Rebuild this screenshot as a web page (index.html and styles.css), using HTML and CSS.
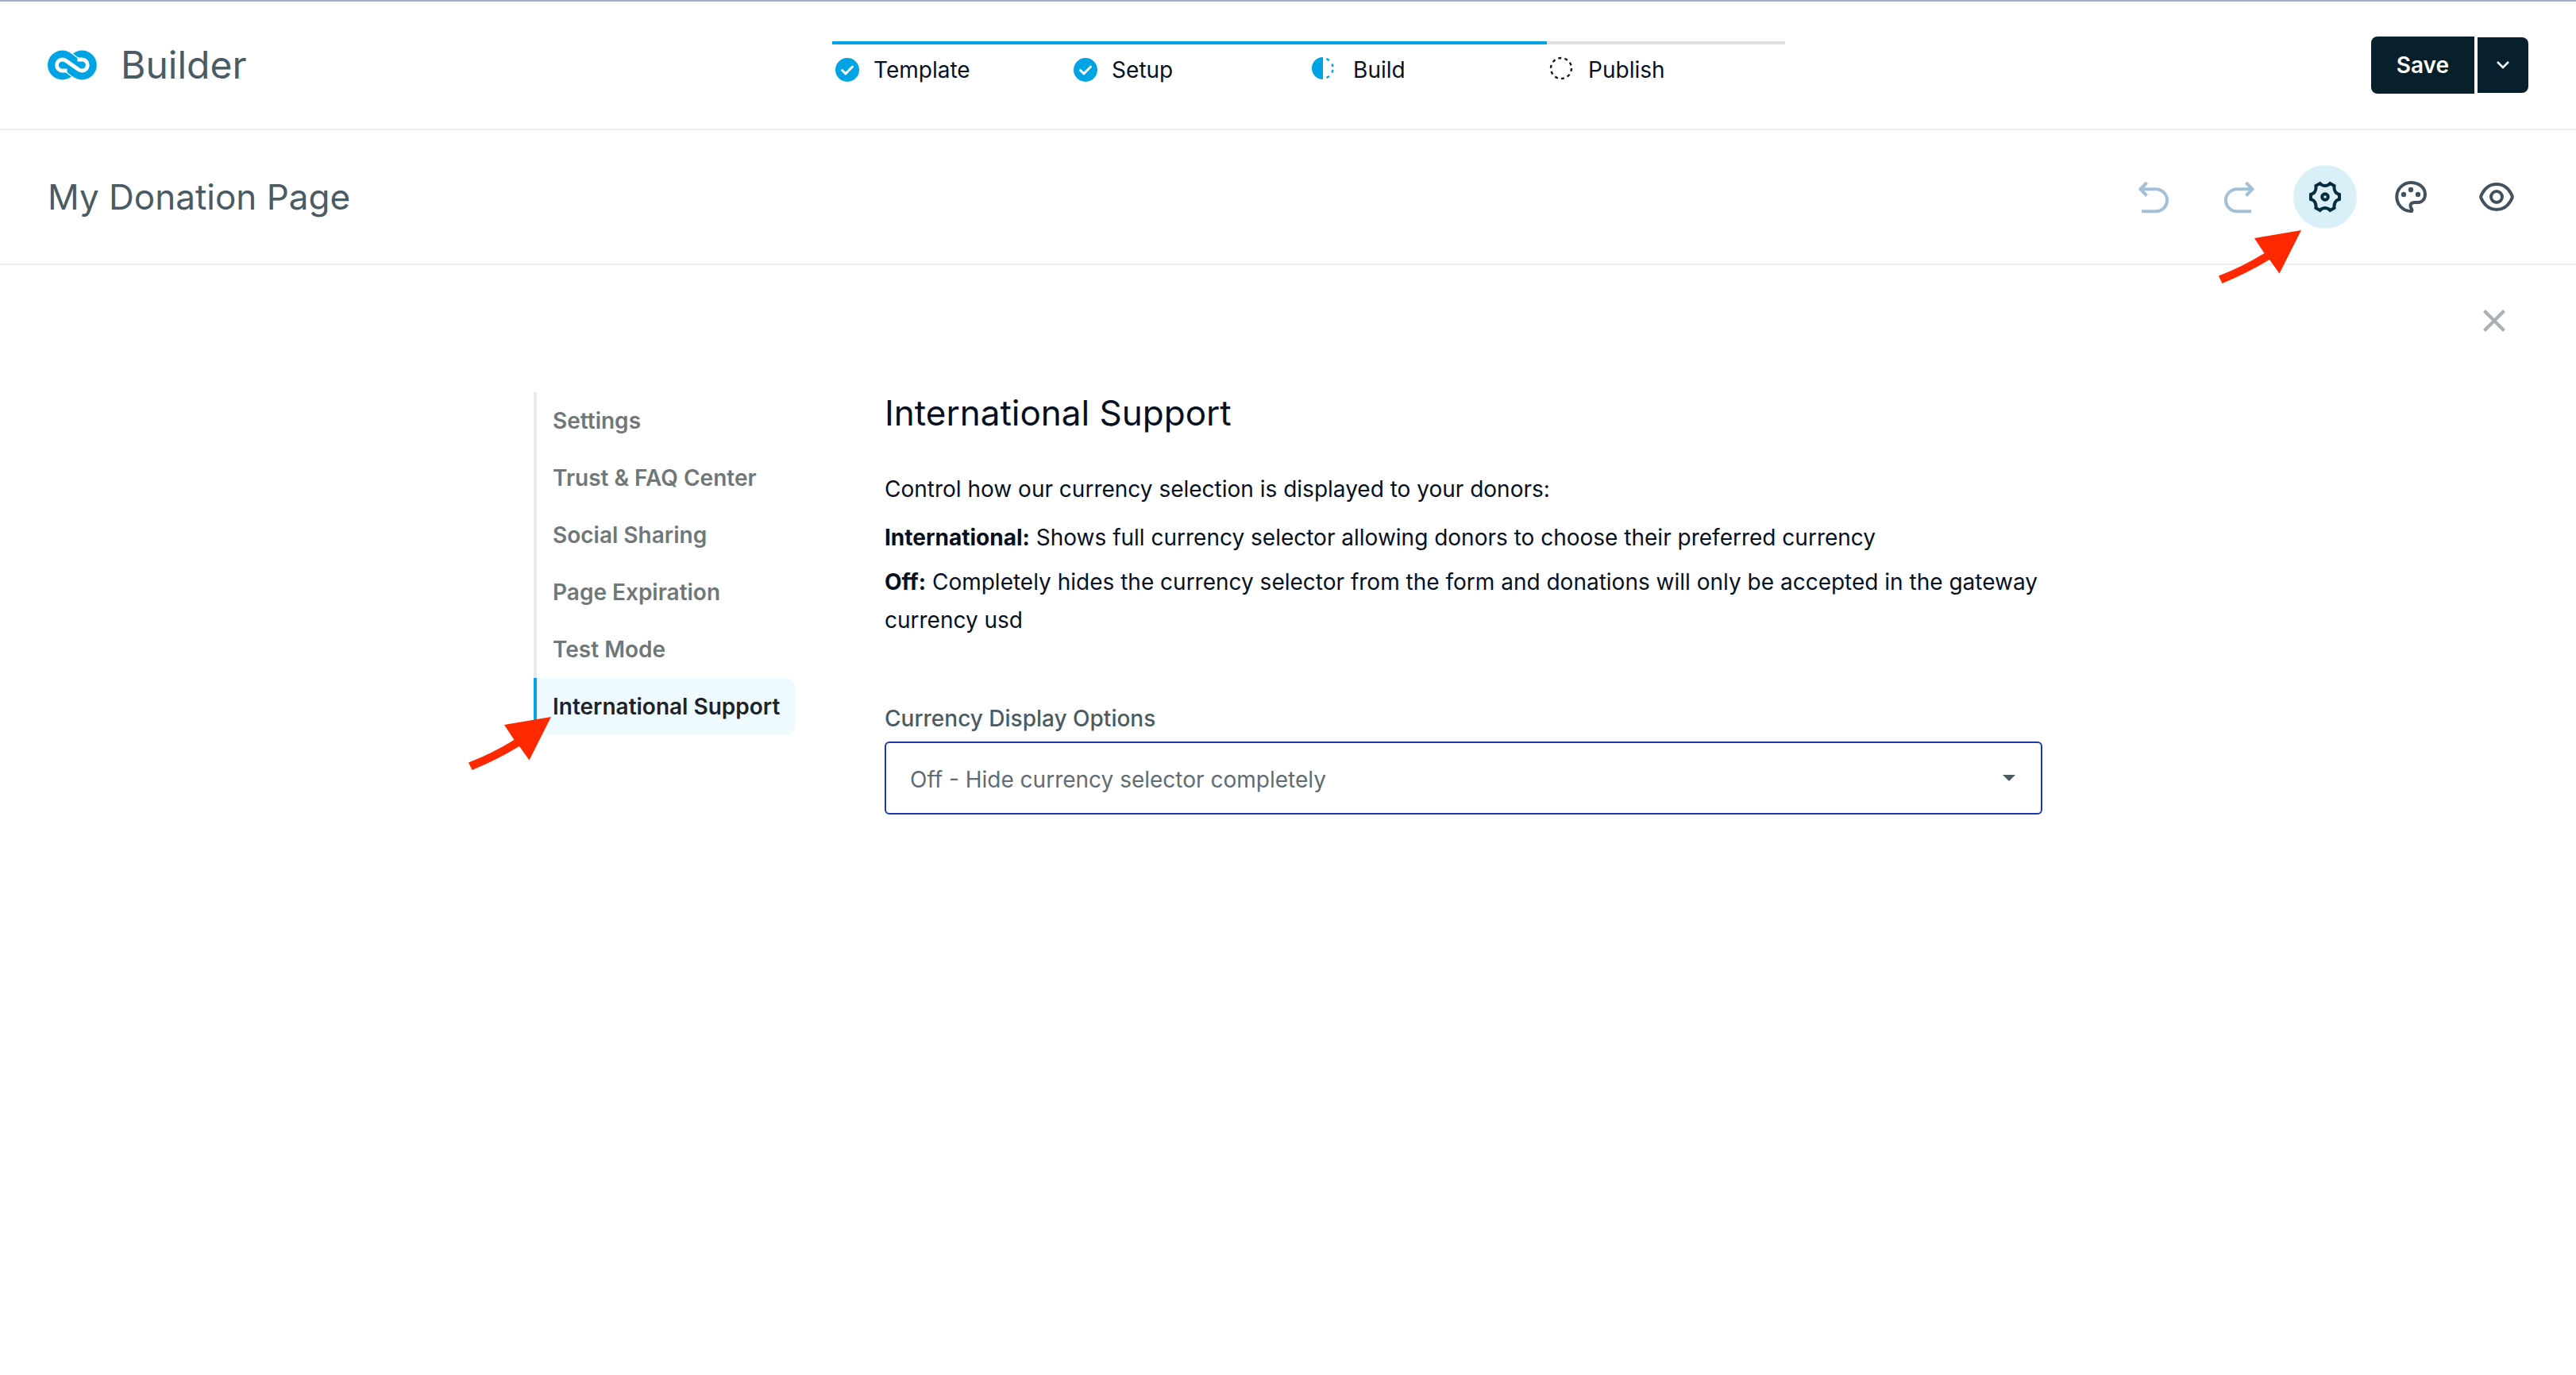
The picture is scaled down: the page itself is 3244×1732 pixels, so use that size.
FILE: index.html
```html
<!DOCTYPE html>
<html lang="en">
<head>
  <meta charset="utf-8">
  <meta name="viewport" content="width=device-width, initial-scale=1">
  <title>Builder - My Donation Page</title>
  <link rel="stylesheet" href="styles.css">
</head>
<body>
  <header class="topbar">
    <a class="brand" href="#">
      <svg class="brand-logo" viewBox="0 0 62 38" aria-hidden="true">
        <circle cx="18.5" cy="19" r="18.5" fill="#00a3e3"/>
        <circle cx="43.3" cy="19" r="18.5" fill="#00a3e3"/>
        <path d="M24.5 26H18.5A7 7 0 0 1 18.5 12C20.600 12 22 12.600 23.500 13.700L38 24C39.500 25.200 41.200 26 43.300 26A7 7 0 0 0 43.300 12H37.500" fill="none" stroke="#fff" stroke-width="4.800"/>
        <path d="M22.500 27.200L30 33M39.500 11L31.500 5" fill="none" stroke="#fff" stroke-width="1.200"/>
      </svg>
      <span class="brand-name">Builder</span>
    </a>

    <ol class="stepper">
      <li class="step is-reached">
        <svg class="step-icon" viewBox="0 0 30 30" aria-hidden="true"><circle cx="15" cy="15" r="15" fill="#00a3e3"/><path d="M8.500 15.500L13 19.800L21.500 11" fill="none" stroke="#fff" stroke-width="3" stroke-linecap="round" stroke-linejoin="round"/></svg>
        <span>Template</span>
      </li>
      <li class="step is-reached">
        <svg class="step-icon" viewBox="0 0 30 30" aria-hidden="true"><circle cx="15" cy="15" r="15" fill="#00a3e3"/><path d="M8.500 15.500L13 19.800L21.500 11" fill="none" stroke="#fff" stroke-width="3" stroke-linecap="round" stroke-linejoin="round"/></svg>
        <span>Setup</span>
      </li>
      <li class="step is-reached" aria-current="step">
        <svg class="step-icon step-icon-wide" viewBox="0 0 34 30" aria-hidden="true"><path d="M14 -1A14 14 0 0 0 14 27Z" fill="#00a3e3"/><path d="M18.500 1L22 3.100M25.300 7.500L26.700 11M26.700 15L25.300 18.500M22 23L18.500 25" fill="none" stroke="#00a3e3" stroke-width="2.400"/></svg>
        <span>Build</span>
      </li>
      <li class="step">
        <svg class="step-icon" viewBox="0 0 30 30" aria-hidden="true"><circle cx="14" cy="13" r="13" fill="none" stroke="#111a22" stroke-width="2.400" stroke-dasharray="4 4.168"/></svg>
        <span>Publish</span>
      </li>
    </ol>

    <div class="save-group">
      <button class="save-main" type="button">Save</button>
      <button class="save-more" type="button" aria-label="More save options">
        <svg class="chevron" viewBox="0 0 16 10" aria-hidden="true"><path d="M1 1L8 8L15 1" fill="none" stroke="#fff" stroke-width="2.500"/></svg>
      </button>
    </div>
  </header>

  <div class="toolbar">
    <h1 class="page-title">My Donation Page</h1>
    <div class="tools">
      <button class="tool tool-muted" type="button" aria-label="Undo">
        <svg class="tool-icon" viewBox="-24 -24 48 48" aria-hidden="true"><path d="M-8.500 -18L-16.500 -9.700L-8.500 -1.500M-16.500 -9.700H3A14 14 0 0 1 3 18.300H-15"/></svg>
      </button>
      <button class="tool tool-muted" type="button" aria-label="Redo">
        <svg class="tool-icon" viewBox="-24 -24 48 48" aria-hidden="true"><path d="M8.500 -18L16.500 -9.700L8.500 -1.500M16.500 -9.700H-3A14 14 0 0 0 -3 18.300H15"/></svg>
      </button>
      <div class="tool-wrap">
        <button class="tool tool-active" type="button" aria-label="Settings">
          <svg class="tool-icon" viewBox="-24 -24 48 48" aria-hidden="true"><path d="M18 -3V3C13.500 4 10.800 8.200 11.600 14L6.400 17C3 13 -3 13 -6.400 17L-11.600 14C-10.800 8.200 -13.500 4 -18 3V-3C-13.500 -4 -10.800 -8.200 -11.600 -14L-6.400 -17C-3 -13 3 -13 6.400 -17L11.600 -14C10.800 -8.200 13.500 -4 18 -3Z"/><circle cx="0" cy="0" r="3.800"/></svg>
        </button>
        <svg class="pointer pointer-tool" viewBox="0 0 104 68" aria-hidden="true"><path d="M104 0L76.500 54.500L64 37Q36 54 4.500 67L0 57.500Q30 46 57.500 29L45 10Z" fill="#ff2800"/></svg>
      </div>
      <button class="tool" type="button" aria-label="Theme">
        <svg class="tool-icon" viewBox="-24 -24 48 48" aria-hidden="true"><path d="M0.500 18A18 18 0 0 1 0 -18C10 -18 18 -12 18 -3C18 3 14 7 9 7H5C1 7 -0.500 9 -0.500 11.500C-0.500 14 1.500 14.800 1.500 16.500C1.500 17.500 1 18 0.500 18Z"/><g fill="currentColor" stroke="none"><circle cx="-9" cy="-3" r="3.200"/><circle cx="0" cy="-9" r="3.200"/><circle cx="9" cy="-3" r="3.200"/></g></svg>
      </button>
      <button class="tool" type="button" aria-label="Preview">
        <svg class="tool-icon" viewBox="-24 -24 48 48" aria-hidden="true"><path d="M-19.500 -1.500C-15.500 -10.500 -9 -16 0 -16C9 -16 15.500 -10.500 19.500 -1.500Q20 0 19.500 1.500C15.500 10.500 9 16 0 16C-9 16 -15.500 10.500 -19.500 1.500Q-20 0 -19.500 -1.500Z"/><circle cx="0" cy="0" r="7"/></svg>
      </button>
    </div>
  </div>

  <main class="panel">
    <div class="panel-close">
      <button class="tool tool-close" type="button" aria-label="Close">
        <svg class="close-icon" viewBox="0 0 28 28" aria-hidden="true"><path d="M1.500 1.500L26.500 26.500M26.500 1.500L1.500 26.500" fill="none" stroke="currentColor" stroke-width="4"/></svg>
      </button>
    </div>

    <div class="settings">
      <nav class="side-nav" aria-label="Settings sections">
        <a class="side-link" href="#">Settings</a>
        <a class="side-link" href="#">Trust &amp; FAQ Center</a>
        <a class="side-link" href="#">Social Sharing</a>
        <a class="side-link" href="#">Page Expiration</a>
        <a class="side-link" href="#">Test Mode</a>
        <a class="side-link is-active" href="#" aria-current="page">International Support
          <svg class="pointer pointer-nav" viewBox="0 0 104 68" aria-hidden="true"><path d="M104 0L76.500 54.500L64 37Q36 54 4.500 67L0 57.500Q30 46 57.500 29L45 10Z" fill="#ff2800"/></svg>
        </a>
      </nav>

      <section class="content">
        <h2 class="content-title">International Support</h2>
        <p class="intro">Control how our currency selection is displayed to your donors:</p>
        <p class="option-note"><strong>International:</strong> Shows full currency selector allowing donors to choose their preferred currency</p>
        <p class="option-note"><strong>Off:</strong> Completely hides the currency selector from the form and donations will only be accepted in the gateway currency usd</p>

        <label class="field-label" for="currency-display">Currency Display Options</label>
        <div class="select-wrap">
          <select class="select" id="currency-display">
            <option>International</option>
            <option selected>Off - Hide currency selector completely</option>
          </select>
          <svg class="select-caret" viewBox="0 0 16 8" aria-hidden="true"><path d="M0 0H16L8 8Z" fill="#4b5b64"/></svg>
        </div>
      </section>
    </div>
  </main>
</body>
</html>
```
FILE: styles.css
```css
*,
*::before,
*::after {
  box-sizing: border-box;
}

body {
  margin: 0;
  min-height: 100vh;
  border-top: 2px solid #a1aec8;
  background: #fff;
  color: #06101f;
  font-family: Inter, "Liberation Sans", sans-serif;
  font-optical-sizing: none;
  font-size: 28px;
  line-height: 36px;
}

button,
select {
  font: inherit;
}

button {
  border: 0;
  padding: 0;
  cursor: pointer;
}

h1,
h2,
p,
ol {
  margin: 0;
  padding: 0;
}

svg {
  display: block;
  flex: none;
}

/* Top bar */

.topbar {
  display: flex;
  align-items: center;
  justify-content: space-between;
  min-height: 162px;
  padding: 0 60px;
  border-bottom: 2px solid #eee;
}

.brand {
  display: flex;
  align-items: center;
  gap: 30px;
  color: #4b5b64;
  text-decoration: none;
}

.brand-logo {
  width: 62px;
  height: 38px;
}

.brand-name {
  font-size: 48px;
  line-height: 60px;
}

.stepper {
  display: grid;
  grid-template-columns: repeat(4, 1fr);
  align-self: flex-start;
  width: 1200px;
  margin-top: 50px;
  list-style: none;
}

.step {
  display: flex;
  align-items: center;
  gap: 18px;
  padding: 14px 0 0 4px;
  border-top: 4px solid #e0e0e0;
}

.step.is-reached {
  border-top-color: #00a3e3;
}

.step-icon {
  width: 30px;
  height: 30px;
  overflow: visible;
}

.step-icon-wide {
  width: 34px;
}

.save-group {
  display: flex;
  align-items: center;
  gap: 4px;
}

.save-main,
.save-more {
  background: #08202c;
  color: #fff;
}

.save-main {
  height: 72px;
  padding: 0 32px;
  border-radius: 8px 0 0 8px;
  font-weight: 600;
}

.save-more {
  display: grid;
  place-items: center;
  width: 64px;
  height: 70px;
  border-radius: 0 8px 8px 0;
}

.chevron {
  width: 16px;
  height: 10px;
}

/* Page toolbar */

.toolbar {
  display: flex;
  align-items: center;
  justify-content: space-between;
  min-height: 170px;
  padding: 0 60px;
  border-bottom: 2px solid #eee;
}

.page-title {
  color: #4b5b64;
  font-size: 44px;
  font-weight: 400;
  line-height: 56px;
}

.tools {
  display: flex;
  gap: 28px;
}

.tool-wrap {
  position: relative;
}

.tool {
  display: grid;
  place-items: center;
  width: 80px;
  height: 80px;
  border-radius: 50%;
  background: none;
  color: #42515e;
}

.tool-muted {
  color: #a3c0d9;
}

.tool-active {
  background: #daf0f9;
  color: #062c3d;
}

.tool-icon {
  width: 48px;
  height: 48px;
  fill: none;
  stroke: currentColor;
  stroke-width: 4;
}

/* Red arrows that call out a control */

.pointer {
  position: absolute;
  z-index: 1;
  width: 104px;
  height: 68px;
  pointer-events: none;
}

.pointer-tool {
  top: 82px;
  right: 70px;
}

.pointer-nav {
  top: 49px;
  left: -86px;
}

/* Settings panel */

.panel-close {
  display: flex;
  justify-content: flex-end;
  padding: 30px 63px 50px;
}

.tool-close {
  color: #a8b0b4;
}

.close-icon {
  width: 28px;
  height: 28px;
}

.settings {
  display: grid;
  grid-template-columns: 330px 1fr;
  align-items: start;
  gap: 112px;
  max-width: 1900px;
  margin: 0 auto;
}

.side-link {
  display: block;
  position: relative;
  padding: 18px 0 18px 20px;
  border-left: 4px solid #e7e9ec;
  color: #707779;
  font-weight: 600;
  text-decoration: none;
  white-space: nowrap;
}

.side-link.is-active {
  border-left-color: #00a3e3;
  border-radius: 0 14px 14px 0;
  background: #eefaff;
  color: #1c2329;
}

.content-title {
  margin-bottom: 46px;
  font-size: 44px;
  font-weight: 400;
  line-height: 52px;
}

.intro,
.option-note {
  line-height: 48px;
}

.intro {
  margin-bottom: 13px;
}

.option-note {
  margin-bottom: 8px;
}

.option-note strong {
  font-weight: 700;
}

.field-label {
  display: block;
  margin: 82px 0 11px;
  color: #4b5b64;
  font-weight: 500;
}

.select-wrap {
  display: grid;
  align-items: center;
}

.select,
.select-caret {
  grid-area: 1 / 1;
}

.select {
  width: 100%;
  height: 92px;
  padding: 4px 64px 0 30px;
  border: 2px solid #1c39a8;
  border-radius: 6px;
  outline: 0;
  appearance: none;
  background: #fff;
  color: #5f6c75;
}

.select-caret {
  justify-self: end;
  width: 16px;
  height: 8px;
  margin-right: 34px;
  pointer-events: none;
}
```
